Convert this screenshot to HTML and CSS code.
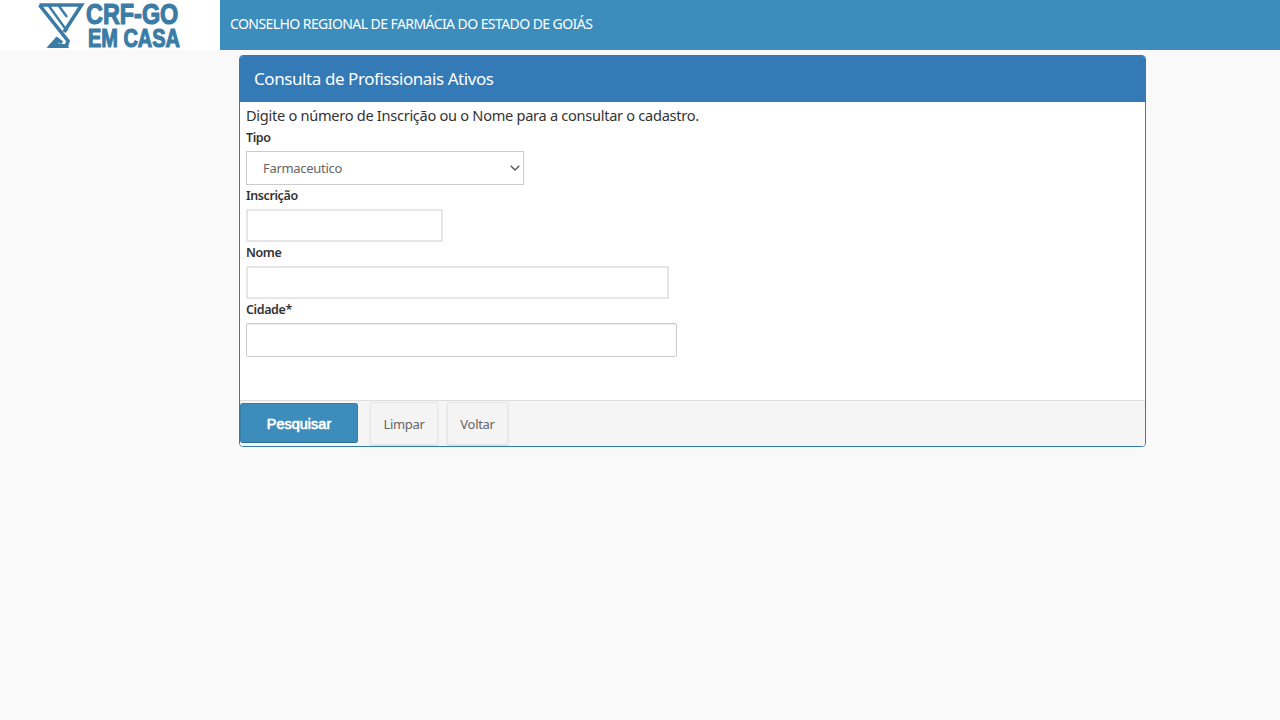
FILE: index.html
```html
<!DOCTYPE html>
<html lang="pt-BR">
<head>
<meta charset="utf-8">
<title>Consulta de Profissionais Ativos</title>
<link rel="stylesheet" href="styles.css">
</head>
<body>
<header class="topbar">
  <div class="brand">
    <svg class="logo" width="49" height="50" viewBox="0 0 49 50" aria-hidden="true">
      <path class="logo-mark" d="M2.5 5H44.5L27 32M2.5 5L31 41L29.500 46H13.500L20 39L25 43"/>
      <path class="logo-solid" d="M11 48H32L30 44H22L19 37Z"/>
      <path class="logo-mark thin" d="M12 6L30 31M22 6L30 17"/>
    </svg>
    <div class="logo-words">
      <span class="logo-line-1">CRF-GO</span>
      <span class="logo-line-2">EM CASA</span>
    </div>
  </div>
  <div class="site-title">CONSELHO REGIONAL DE FARMÁCIA DO ESTADO DE GOIÁS</div>
</header>
<main class="panel">
  <h1 class="panel-heading">Consulta de Profissionais Ativos</h1>
  <form class="panel-body">
    <p class="intro">Digite o número de Inscrição ou o Nome para a consultar o cadastro.</p>
    <label class="field-label">Tipo</label>
    <select class="control select-tipo"><option>Farmaceutico</option></select>
    <label class="field-label">Inscrição</label>
    <input class="control soft input-inscricao" type="text">
    <label class="field-label">Nome</label>
    <input class="control soft input-nome" type="text">
    <label class="field-label">Cidade*</label>
    <input class="control input-cidade" type="text">
  </form>
  <footer class="panel-footer">
    <button class="btn btn-primary" type="button">Pesquisar</button>
    <button class="btn btn-plain btn-limpar" type="button">Limpar</button>
    <button class="btn btn-plain btn-voltar" type="button">Voltar</button>
  </footer>
</main>
</body>
</html>
```
FILE: styles.css
```css
* { box-sizing: border-box; }
html, body { margin: 0; height: 100%; }
body {
  background: #f9f9f9;
  color: #333;
  font-family: "Noto Sans", "Open Sans", sans-serif;
  font-size: 14px;
}
.topbar { display: flex; height: 50px; background: #3c8dbc; }
.brand { display: flex; width: 220px; background: #fff; padding-left: 37px; }
.logo { display: block; flex: none; }
.logo-mark { fill: none; stroke: #3a7ca5; stroke-width: 3.6; }
.logo-mark.thin { stroke-width: 2.4; }
.logo-solid { fill: #3a7ca5; }
.logo-words {
  display: flex;
  flex-direction: column;
  align-items: flex-start;
  padding-top: 2px;
  color: #3a7ca5;
  font-family: "Liberation Sans", sans-serif;
  font-weight: 700;
  white-space: nowrap;
  -webkit-text-stroke: 1.2px #3a7ca5;
}
.logo-line-1 { height: 23px; font-size: 30px; line-height: 23px; transform: scaleX(.78); transform-origin: left center; }
.logo-line-2 { height: 22px; margin: 2px 0 0 2px; font-size: 26px; line-height: 22px; transform: scaleX(.767); transform-origin: left center; }
.site-title {
  color: #fff;
  font-size: 14px;
  letter-spacing: -0.57px;
  line-height: 48px;
  padding-left: 10px;
}
.panel {
  width: 907px;
  height: 392px;
  margin: 5px 0 0 239px;
  display: flex;
  flex-direction: column;
  background: #fff;
  border: 1px solid #337ab7;
  border-radius: 4px;
  overflow: hidden;
}
.panel-heading {
  margin: 0;
  height: 46px;
  flex: none;
  padding: 0 14px;
  background: #337ab7;
  color: #fff;
  font-size: 17px;
  font-weight: 400;
  letter-spacing: -0.42px;
  line-height: 46px;
}
.panel-body { flex: 1; display: flex; flex-direction: column; align-items: flex-start; padding: 0 6px; }
.intro { margin: 2px 0 0; font-size: 14.6px; letter-spacing: -0.29px; line-height: 22px; height: 22px; color: #333; }
.field-label { font-size: 12.5px; font-weight: 600; letter-spacing: -0.4px; line-height: 22px; height: 22px; color: #333; }
.intro + .field-label { margin-top: 1px; }
.control {
  display: block;
  height: 34px;
  border: 1px solid #ccc;
  background: #fff;
  border-radius: 0;
  font: inherit;
  outline: 0;
}
.select-tipo {
  appearance: none;
  width: 278px;
  margin-top: 2px;
  padding: 0 0 0 16px;
  color: #666;
  font-size: 13px;
  letter-spacing: -0.3px;
  background: #fff url("data:image/svg+xml,%3Csvg xmlns='http://www.w3.org/2000/svg' width='10' height='6'%3E%3Cpath d='M.7.7L5 5l4.3-4.3' fill='none' stroke='%23555' stroke-width='1.3'/%3E%3C/svg%3E") no-repeat right 3px center;
}
.soft { border: 2px solid #e6e6e6; height: 33px; margin-top: 2px; }
.input-inscricao { width: 197px; }
.input-nome { width: 423px; }
.input-cidade { width: 431px; margin-top: 2px; border-radius: 2px; box-shadow: inset 0 1px 1px rgba(0,0,0,.075); }
.panel-footer {
  flex: none;
  height: 46px;
  display: flex;
  align-items: center;
  background: #f5f5f5;
  border-top: 1px solid #ddd;
}
.btn { font-family: inherit; cursor: pointer; }
.btn-primary {
  width: 118px;
  height: 40px;
  margin-bottom: 2px;
  padding: 2px 0 0;
  background: #3c8dbc;
  border: 1px solid #367fa9;
  border-bottom-color: #2f6f95;
  border-radius: 3px;
  color: #fff;
  font-family: "Liberation Sans", sans-serif;
  font-size: 14.5px;
  font-weight: 400;
  -webkit-text-stroke: 0.35px #fff;
  text-shadow: 0 0 1px #fff;
}
.btn-plain {
  height: 43px;
  padding: 0;
  background: #f4f4f4;
  border: 1px solid #e6e6e6;
  border-radius: 2px;
  box-shadow: 0 1px 2px rgba(0,0,0,.12);
  color: #666;
  font-size: 13px;
  letter-spacing: -0.3px;
}
.btn-limpar { width: 68px; margin-left: 12px; }
.btn-voltar { width: 61px; margin-left: 9px; }
```
